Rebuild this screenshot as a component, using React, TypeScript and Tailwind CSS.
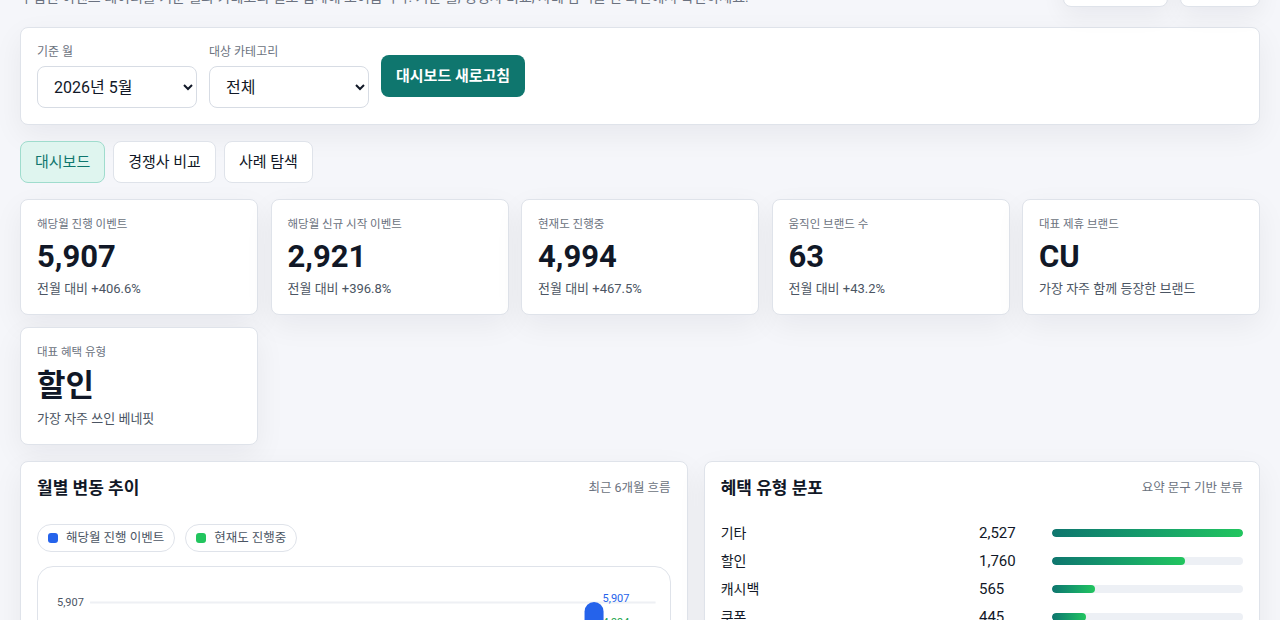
import React from "react";

const kpis = [
  { label: "해당월 진행 이벤트", value: "5,907", sub: "전월 대비 +406.6%" },
  { label: "해당월 신규 시작 이벤트", value: "2,921", sub: "전월 대비 +396.8%" },
  { label: "현재도 진행중", value: "4,994", sub: "전월 대비 +467.5%" },
  { label: "움직인 브랜드 수", value: "63", sub: "전월 대비 +43.2%" },
  { label: "대표 제휴 브랜드", value: "CU", sub: "가장 자주 함께 등장한 브랜드" },
  { label: "대표 혜택 유형", value: "할인", sub: "가장 자주 쓰인 베네핏", tall: true },
];

const benefits = [
  { label: "기타", value: 2527 },
  { label: "할인", value: 1760 },
  { label: "캐시백", value: 565 },
  { label: "쿠폰", value: 445 },
  { label: "적립", value: 320 },
];

const FONT = { fontFamily: 'Roboto, "Noto Sans CJK KR", "Noto Sans", sans-serif' };

export default function App() {
  const max = benefits[0].value;
  return (
    <div style={FONT} className="min-h-screen w-full bg-[#f5f6fa] text-[#111827] overflow-hidden">
      <div className="px-5 -mt-[73px] pb-10">
        {/* header */}
        <div className="h-[80px] flex items-end justify-between">
          <div>
            <h1 className="text-[26px] font-bold leading-8">제휴 이벤트 인사이트 대시보드</h1>
            <p className="mt-1 text-sm leading-5 text-[#6b7280]">
              수집된 이벤트 데이터를 기준 월과 카테고리 별로 집계해 보여줍니다. 기준 월, 경쟁사 비교, 사례 탐색을 한 화면에서 확인하세요.
            </p>
          </div>
          <div className="flex gap-3">
            <button className="h-10 w-[105px] rounded-lg border border-[#dfe3ea] bg-white text-sm shadow-[0_8px_24px_rgba(15,23,42,0.06)]">
              데이터 내보내기
            </button>
            <button className="h-10 w-[80px] rounded-lg border border-[#dfe3ea] bg-white text-sm shadow-[0_8px_24px_rgba(15,23,42,0.06)]">
              도움말
            </button>
          </div>
        </div>

        {/* filters */}
        <div className="mt-5 rounded-lg border border-[#dfe3ea] bg-white p-4 shadow-[0_10px_30px_rgba(15,23,42,0.06)]">
          <div className="flex items-center gap-3">
            <label className="flex flex-col">
              <span className="text-xs leading-4 text-[#6b7280] mb-1.5">기준 월</span>
              <select className="h-[42px] w-40 rounded-lg border border-[#d7dce4] bg-white pl-3 pr-2 text-base text-[#111827]" defaultValue="2026-05">
                <option value="2026-05">2026년 5월</option>
              </select>
            </label>
            <label className="flex flex-col">
              <span className="text-xs leading-4 text-[#6b7280] mb-1.5">대상 카테고리</span>
              <select className="h-[42px] w-40 rounded-lg border border-[#d7dce4] bg-white pl-3 pr-2 text-base text-[#111827]" defaultValue="all">
                <option value="all">전체</option>
              </select>
            </label>
            <button className="h-[42px] rounded-lg bg-[#0f766e] px-[15px] text-[15px] font-semibold text-white">
              대시보드 새로고침
            </button>
          </div>
        </div>

        {/* tabs */}
        <div className="mt-4 flex gap-2">
          <button className="h-[42px] rounded-lg border border-[#9fdccd] bg-[#dff5ef] px-[14px] text-[15px] text-[#0f766e]">대시보드</button>
          <button className="h-[42px] rounded-lg border border-[#dfe3ea] bg-white px-[14px] text-[15px] text-[#111827]">경쟁사 비교</button>
          <button className="h-[42px] rounded-lg border border-[#dfe3ea] bg-white px-[14px] text-[15px] text-[#111827]">사례 탐색</button>
        </div>

        {/* kpis */}
        <div className="mt-4 grid grid-cols-5 gap-x-[12.5px] gap-y-3">
          {kpis.map((k) => (
            <div key={k.label} className="rounded-lg border border-[#dfe3ea] bg-white p-4 shadow-[0_10px_30px_rgba(15,23,42,0.06)]">
              <div className="text-[11.5px] leading-4 text-[#6b7280]">{k.label}</div>
              <div className={k.tall ? "mt-1.5 text-[31px] font-bold leading-[40px] text-[#111827]" : "mt-1.5 text-[31px] font-bold leading-[38px] text-[#111827]"}>
                {k.value}
              </div>
              <div className="mt-1 text-[13px] leading-[18px] text-[#4b5563]">{k.sub}</div>
            </div>
          ))}
        </div>

        {/* panels */}
        <div className="mt-4 grid grid-cols-[1.2fr_1fr] gap-4">
          <div className="rounded-lg border border-[#dfe3ea] bg-white p-4 shadow-[0_10px_30px_rgba(15,23,42,0.06)]">
            <div className="flex items-center justify-between h-5">
              <h2 className="text-[17px] font-bold leading-5">월별 변동 추이</h2>
              <span className="text-[12.5px] text-[#6b7280]">최근 6개월 흐름</span>
            </div>
            <div className="mt-[26px] flex gap-2.5">
              <span className="flex h-7 items-center gap-2 rounded-full border border-[#dfe3ea] px-2.5 text-[12.5px] text-[#4b5563]">
                <span className="h-2.5 w-2.5 rounded-[3px] bg-[#2563eb]" />
                해당월 진행 이벤트
              </span>
              <span className="flex h-7 items-center gap-2 rounded-full border border-[#dfe3ea] px-2.5 text-[12.5px] text-[#4b5563]">
                <span className="h-2.5 w-2.5 rounded-[3px] bg-[#22c55e]" />
                현재도 진행중
              </span>
            </div>
            <div className="mt-[14px] rounded-2xl border border-[#dfe3ea] bg-white">
              <svg width="100%" height="260" viewBox="0 0 631 260" preserveAspectRatio="none">
                <line x1="52" y1="35.5" x2="617" y2="35.5" stroke="#eef0f4" strokeWidth="2" />
                <text x="19" y="39" fontSize="11" fill="#4b5563">5,907</text>
                <line x1="52" y1="95.5" x2="617" y2="95.5" stroke="#eef0f4" strokeWidth="2" />
                <line x1="52" y1="155.5" x2="617" y2="155.5" stroke="#eef0f4" strokeWidth="2" />
                <line x1="52" y1="215.5" x2="617" y2="215.5" stroke="#eef0f4" strokeWidth="2" />
                {[0, 1, 2, 3, 4].map((i) => {
                  const x = 90 + i * 95;
                  return (
                    <g key={i}>
                      <rect x={x} y={175 + i * 5} width="19" height={40 - i * 5} rx="9" fill="#2563eb" />
                      <rect x={x + 19} y={185 + i * 4} width="19" height={30 - i * 4} rx="9" fill="#22c55e" />
                    </g>
                  );
                })}
                <rect x="546" y="35" width="19" height="180" rx="9.5" fill="#2563eb" />
                <rect x="565" y="63" width="19" height="152" rx="9.5" fill="#22c55e" />
                <text x="564" y="35" fontSize="11" fill="#2563eb">5,907</text>
                <text x="564" y="59" fontSize="11" fill="#16a34a">4,994</text>
              </svg>
            </div>
          </div>

          <div className="rounded-lg border border-[#dfe3ea] bg-white p-4 shadow-[0_10px_30px_rgba(15,23,42,0.06)]">
            <div className="flex items-center justify-between h-5">
              <h2 className="text-[17px] font-bold leading-5">혜택 유형 분포</h2>
              <span className="text-[12.5px] text-[#6b7280]">요약 문구 기반 분류</span>
            </div>
            <div className="mt-[25px] flex flex-col gap-2">
              {benefits.map((b) => (
                <div key={b.label} className="grid grid-cols-[1fr_61px_191px] items-center gap-3 h-5">
                  <span className="text-sm leading-5">{b.label}</span>
                  <span className="text-[15px] leading-5">{b.value.toLocaleString()}</span>
                  <div className="h-2 rounded-full bg-[#edf0f5] overflow-hidden">
                    <div
                      className="h-full rounded-full bg-gradient-to-r from-[#0f766e] to-[#22c55e]"
                      style={{ width: `${(b.value / max) * 100}%` }}
                    />
                  </div>
                </div>
              ))}
            </div>
          </div>
        </div>
      </div>
    </div>
  );
}
